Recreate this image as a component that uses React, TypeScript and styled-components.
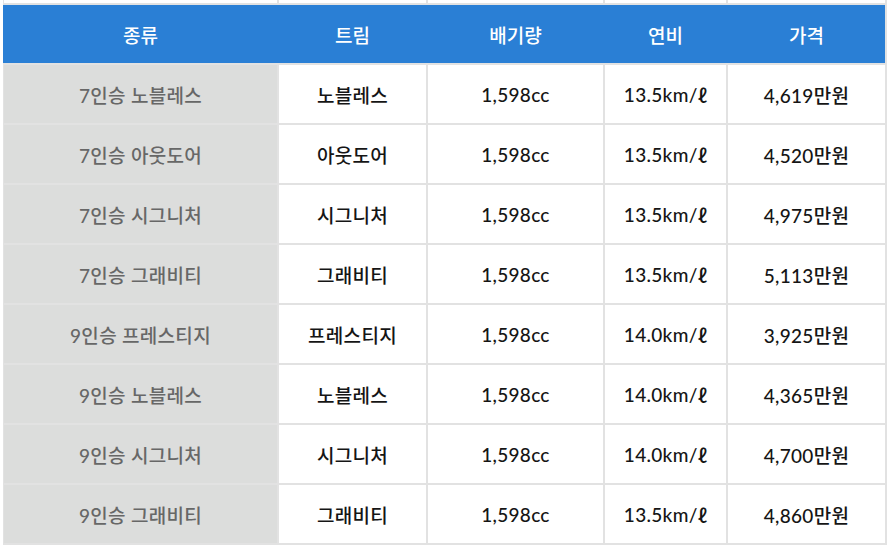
import React from 'react';
import styled, { createGlobalStyle } from 'styled-components';

const GlobalStyle = createGlobalStyle`
  html, body {
    margin: 0;
    padding: 0;
    background: #ffffff;
  }
  body {
    font-family: 'Lato', 'Noto Sans CJK KR', sans-serif;
  }
`;

type Trim = {
  kind: string;
  trim: string;
  cc: string;
  km: string;
  price: string;
};

const columns = ['종류', '트림', '배기량', '연비', '가격'];

const trimList: Trim[] = [
  { kind: '7인승 노블레스', trim: '노블레스', cc: '1,598cc', km: '13.5', price: '4,619만원' },
  { kind: '7인승 아웃도어', trim: '아웃도어', cc: '1,598cc', km: '13.5', price: '4,520만원' },
  { kind: '7인승 시그니처', trim: '시그니처', cc: '1,598cc', km: '13.5', price: '4,975만원' },
  { kind: '7인승 그래비티', trim: '그래비티', cc: '1,598cc', km: '13.5', price: '5,113만원' },
  { kind: '9인승 프레스티지', trim: '프레스티지', cc: '1,598cc', km: '14.0', price: '3,925만원' },
  { kind: '9인승 노블레스', trim: '노블레스', cc: '1,598cc', km: '14.0', price: '4,365만원' },
  { kind: '9인승 시그니처', trim: '시그니처', cc: '1,598cc', km: '14.0', price: '4,700만원' },
  { kind: '9인승 그래비티', trim: '그래비티', cc: '1,598cc', km: '13.5', price: '4,860만원' },
];

const COLS = '273px 147px 175px 121px 157px';

const App = () => {
  return (
    <>
      <GlobalStyle />
      <Sheet>
        {/* 위쪽 셀 (잘린 행) */}
        {columns.map((c) => (
          <EdgeCell key={`edge-${c}`} />
        ))}
        <HeaderRow>
          {columns.map((c) => (
            <HeaderCell key={c}>{c}</HeaderCell>
          ))}
        </HeaderRow>
        {trimList.map((row) => (
          <React.Fragment key={row.kind}>
            <Cell $muted>{row.kind}</Cell>
            <Cell>{row.trim}</Cell>
            <Cell>{row.cc}</Cell>
            <Cell>
              {row.km}km/<Liter>ℓ</Liter>
            </Cell>
            <Cell>{row.price}</Cell>
          </React.Fragment>
        ))}
      </Sheet>
    </>
  );
};

const Sheet = styled.div`
  display: grid;
  grid-template-columns: ${COLS};
  grid-template-rows: 3px 58px repeat(8, 58px);
  gap: 2px;
  width: max-content;
  margin-left: 3px;
  padding: 0 2px 2px 1px;
  background: #e2e2e2;
`;

const EdgeCell = styled.div`
  background: #ffffff;
`;

const HeaderRow = styled.div`
  grid-column: 1 / -1;
  display: grid;
  grid-template-columns: ${COLS};
  gap: 2px;
  margin-left: -1px;
  padding-left: 1px;
  background: #2a7fd5;
`;

const HeaderCell = styled.div`
  display: flex;
  align-items: center;
  justify-content: center;
  color: #ffffff;
  font-size: 19px;
  font-weight: 500;
`;

const Cell = styled.div<{ $muted?: boolean }>`
  display: flex;
  align-items: center;
  justify-content: center;
  white-space: pre;
  background: ${({ $muted }) => ($muted ? '#dcdddc' : '#ffffff')};
  color: ${({ $muted }) => ($muted ? '#676767' : '#151515')};
  font-size: 19px;
  font-weight: 500;
  letter-spacing: 0.3px;
`;

const Liter = styled.span`
  font-family: 'Noto Sans CJK KR', sans-serif;
  font-weight: 500;
`;

export default App;
